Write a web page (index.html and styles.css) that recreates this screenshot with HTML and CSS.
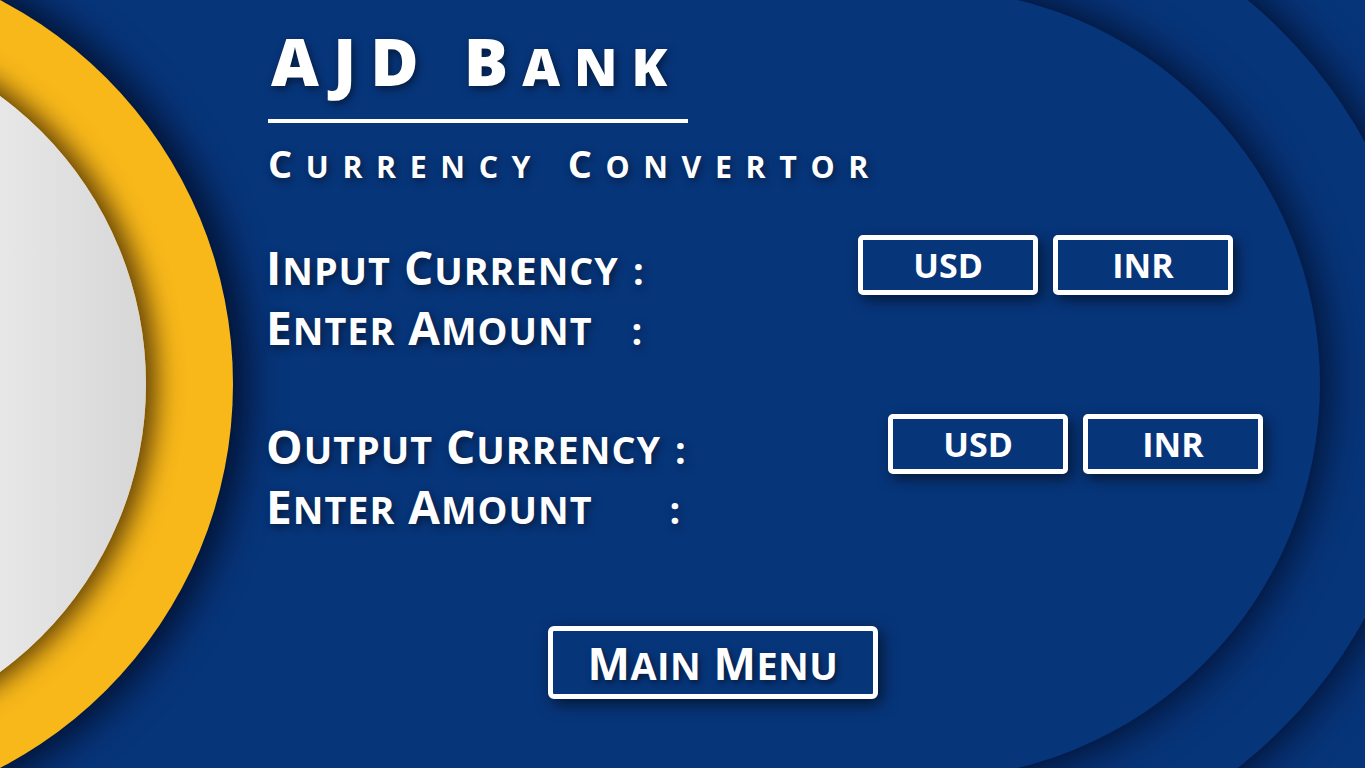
FILE: index.html
```html
<!DOCTYPE html>
<html lang="en">
<head>
<meta charset="utf-8">
<title>AJD Bank - Currency Convertor</title>
<link rel="stylesheet" href="styles.css">
</head>
<body>
<div class="screen">
  <div class="arcs">
    <div class="deco arc-outer"></div>
    <div class="deco arc-inner"></div>
  </div>
  <div class="deco ring-yellow"></div>
  <div class="deco disc-white"></div>

  <main class="content">
    <h1 class="title">AJD B<span class="sc">ank</span></h1>
    <div class="rule"></div>
    <h2 class="subtitle">C<span class="sc">urrency</span> C<span class="sc">onvertor</span></h2>

    <section class="row row-input">
      <div class="labels">
        <p class="label">I<span class="sc">nput</span> C<span class="sc">urrency</span><span class="sc colon colon-c">:</span></p>
        <p class="label">E<span class="sc">nter</span> A<span class="sc">mount</span><span class="sc colon colon-a">:</span></p>
      </div>
      <div class="choices">
        <button class="chip">USD</button>
        <button class="chip">INR</button>
      </div>
    </section>

    <section class="row row-output">
      <div class="labels">
        <p class="label">O<span class="sc">utput</span> C<span class="sc">urrency</span><span class="sc colon colon-c">:</span></p>
        <p class="label">E<span class="sc">nter</span> A<span class="sc">mount</span><span class="sc colon colon-b">:</span></p>
      </div>
      <div class="choices">
        <button class="chip">USD</button>
        <button class="chip">INR</button>
      </div>
    </section>

    <button class="menu-btn">M<span class="sc">ain</span> M<span class="sc">enu</span></button>
  </main>
</div>
</body>
</html>
```

FILE: styles.css
```css
* { box-sizing: border-box; }

html, body {
  margin: 0;
  padding: 0;
}

body {
  width: 1365px;
  height: 768px;
  overflow: hidden;
  background: #07357a;
  font-family: "Open Sans", "Liberation Sans", sans-serif;
  color: #ffffff;
}

.screen {
  position: relative;
  width: 1365px;
  height: 768px;
  overflow: hidden;
  background: #07357a;
}

/* decorative background shapes */
.deco {
  position: absolute;
  border-radius: 50%;
}

/* window that only shows the right halves of the two big discs */
.arcs {
  position: absolute;
  left: 925px;
  top: 0;
  width: 440px;
  height: 768px;
  overflow: hidden;
}

.arc-outer {
  left: -487px;
  top: -114px;
  width: 988px;
  height: 988px;
  background: #07357a;
  box-shadow: 0 0 42px 6px rgba(0, 6, 28, 0.8);
}

.arc-inner {
  left: -395px;
  top: -11px;
  width: 790px;
  height: 790px;
  background: #07357a;
  box-shadow: 0 0 42px 6px rgba(0, 6, 28, 0.8);
}

.ring-yellow {
  left: -633px;
  top: -49px;
  width: 866px;
  height: 866px;
  background: #f8b81a;
  box-shadow: 6px 0 36px 8px rgba(0, 8, 30, 0.8);
}

.disc-white {
  left: -568px;
  top: 27px;
  width: 714px;
  height: 714px;
  background: linear-gradient(90deg, #f5f5f5 62%, #d7d7d7 100%);
  box-shadow: 6px 0 26px 4px rgba(40, 22, 0, 0.75);
}

/* content */
.content {
  position: relative;
  z-index: 1;
  padding: 27px 0 0 268px;
  display: flex;
  flex-direction: column;
  align-items: flex-start;
}

.sc {
  font-size: 0.79em;
}

.title {
  margin: 0 0 0 3px;
  font-size: 66px;
  line-height: 1;
  font-weight: 800;
  text-transform: uppercase;
  letter-spacing: 14px;
  text-shadow: 2px 3px 8px rgba(0, 0, 0, 0.5);
}

.rule {
  margin-top: 26px;
  width: 420px;
  height: 4px;
  background: #ffffff;
}

.subtitle {
  margin: 21px 0 0;
  font-size: 38px;
  line-height: 1;
  font-weight: 700;
  text-transform: uppercase;
  letter-spacing: 13.6px;
  text-shadow: 2px 3px 8px rgba(0, 0, 0, 0.5);
}

.subtitle .sc { font-size: 0.8em; }

.row {
  display: flex;
  align-items: flex-start;
}

.row-input { margin-top: 53px; }
.row-output { margin-top: 64px; }

.labels {
  padding-top: 9px;
  display: flex;
  flex-direction: column;
  gap: 14px;
}

.row-input .labels { width: 590px; }
.row-output .labels { width: 620px; }

.label {
  margin: 0 0 0 -2px;
  font-size: 46px;
  line-height: 1;
  font-weight: 700;
  text-transform: uppercase;
  letter-spacing: 1px;
  white-space: nowrap;
  text-shadow: 2px 3px 8px rgba(0, 0, 0, 0.5);
}

.label .sc { font-size: 0.82em; }

.colon-c { margin-left: 14px; }
.colon-a { margin-left: 39px; }
.colon-b { margin-left: 77px; }

.choices {
  display: flex;
  gap: 15px;
}

.chip {
  width: 180px;
  height: 60px;
  padding: 0;
  border: 5px solid #ffffff;
  border-radius: 5px;
  background: #07357a;
  color: #ffffff;
  font-family: inherit;
  font-size: 34px;
  font-weight: 700;
  line-height: 1;
  box-shadow: 4px 5px 14px rgba(0, 0, 0, 0.55);
}

.menu-btn {
  margin: 97px 0 0 280px;
  width: 330px;
  height: 73px;
  padding: 0;
  border: 5px solid #ffffff;
  border-radius: 6px;
  background: #07357a;
  color: #ffffff;
  font-family: inherit;
  font-size: 45px;
  font-weight: 700;
  line-height: 1;
  text-transform: uppercase;
  letter-spacing: 0.5px;
  text-shadow: 2px 3px 6px rgba(0, 0, 0, 0.5);
  box-shadow: 4px 5px 16px rgba(0, 0, 0, 0.6);
}

.menu-btn .sc { font-size: 0.84em; }
```
